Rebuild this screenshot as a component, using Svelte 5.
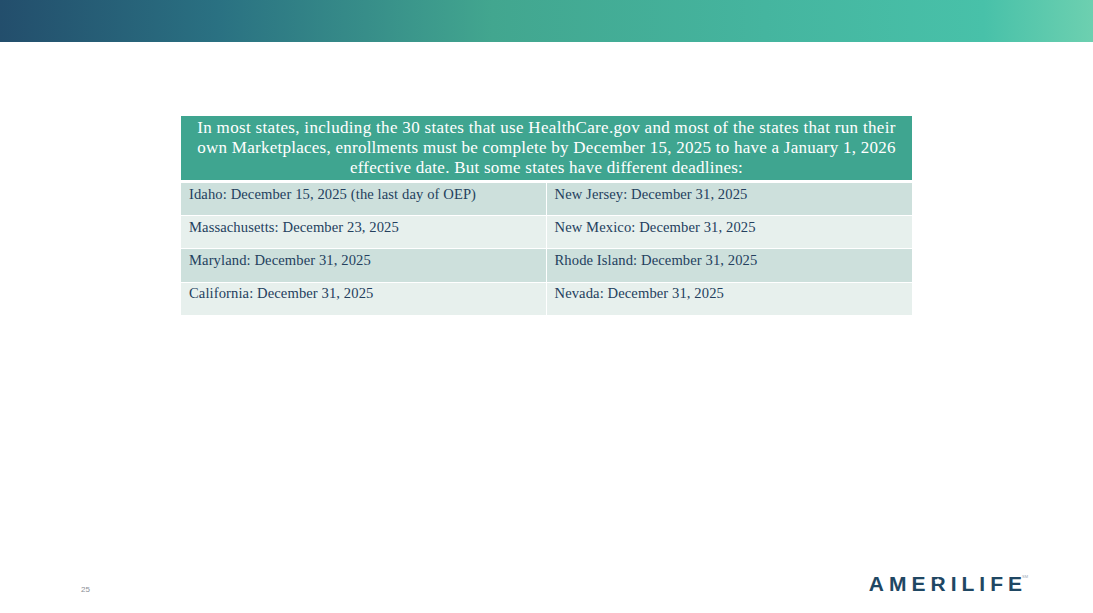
<script>
  const rows = [
    ['Idaho: December 15, 2025 (the last day of OEP)', 'New Jersey: December 31, 2025'],
    ['Massachusetts: December 23, 2025', 'New Mexico: December 31, 2025'],
    ['Maryland: December 31, 2025', 'Rhode Island: December 31, 2025'],
    ['California: December 31, 2025', 'Nevada: December 31, 2025']
  ];
</script>

<div class="slide">
  <div class="banner"></div>

  <main class="content">
    <table>
      <thead>
        <tr>
          <th colspan="2">
            In most states, including the 30 states that use HealthCare.gov and most of the states that run their<br />
            <span class="tight">own Marketplaces, enrollments must be complete by December 15, 2025 to have a January 1, 2026<br />
            effective date. But some states have different deadlines:</span>
          </th>
        </tr>
      </thead>
      <tbody>
        {#each rows as row}
          <tr>
            {#each row as cell}
              <td>{cell}</td>
            {/each}
          </tr>
        {/each}
      </tbody>
    </table>
  </main>

  <footer>
    <span class="page">25</span>
    <div class="logo">
      <span>AME</span><span class="r">R<svg viewBox="0 0 10 10" aria-hidden="true"><path d="M5 0.5 6.2 3.7 9.6 3.8 6.9 5.9 7.9 9.2 5 7.3 2.1 9.2 3.1 5.9 0.4 3.8 3.8 3.7Z" /></svg></span><span>ILIF</span><span class="last">E</span><sup>SM</sup>
    </div>
  </footer>
</div>

<style>
  :global(body) {
    margin: 0;
    background: #fff;
  }
  .slide {
    width: 1093px;
    height: 613px;
    display: flex;
    flex-direction: column;
    overflow: hidden;
  }
  .banner {
    height: 42px;
    background: linear-gradient(90deg, #234e6c 0%, #2a7182 20%, #42a68f 45%, #45b59f 70%, #48c1a9 90%, #6dd0b0 100%);
  }
  .content {
    flex: 1;
    padding: 74px 181px 0;
  }
  table {
    width: 731px;
    border-collapse: separate;
    border-spacing: 0;
    table-layout: fixed;
    font-family: "Liberation Serif", serif;
  }
  th {
    height: 67px;
    box-sizing: border-box;
    padding: 0;
    background: #3fa590;
    color: #fff;
    font-size: 17px;
    font-weight: 400;
    letter-spacing: 0.32px;
    line-height: 20px;
    text-align: center;
    background-clip: padding-box;
    border-bottom: 3px solid #fff;
  }
  .tight {
    letter-spacing: 0.25px;
  }
  td {
    height: 33.2px;
    padding: 1.6px 8px 0;
    vertical-align: top;
    color: #24405e;
    font-size: 14.6px;
    letter-spacing: 0.1px;
    line-height: 18px;
    box-sizing: border-box;
    border-bottom: 1px solid #fff;
  }
  td:first-child {
    border-right: 1px solid #fff;
    width: 366px;
  }
  tbody tr:nth-child(odd) td {
    background: #cde0dc;
  }
  tbody tr:nth-child(even) td {
    background: #e7f0ed;
  }
  footer {
    display: flex;
    justify-content: space-between;
    align-items: flex-end;
    padding: 0 65px 17px 81px;
    height: 24px;
  }
  .page {
    margin-bottom: 2px;
    font-family: "Liberation Sans", sans-serif;
    font-size: 8px;
    line-height: 8px;
    color: #8b8f96;
  }
  .logo {
    display: flex;
    color: #1f4763;
    font-family: "Liberation Sans", sans-serif;
    font-weight: 700;
    font-size: 21px;
    letter-spacing: 5px;
    line-height: 24px;
  }
  .last {
    letter-spacing: 0;
  }
  .r {
    position: relative;
  }
  .r svg {
    position: absolute;
    left: 3.5px;
    top: 4.5px;
    width: 8px;
    height: 8px;
    fill: #fff;
  }
  sup {
    font-size: 4px;
    letter-spacing: 0;
    line-height: 10px;
    color: #9aa8b4;
    font-weight: 400;
  }
</style>
